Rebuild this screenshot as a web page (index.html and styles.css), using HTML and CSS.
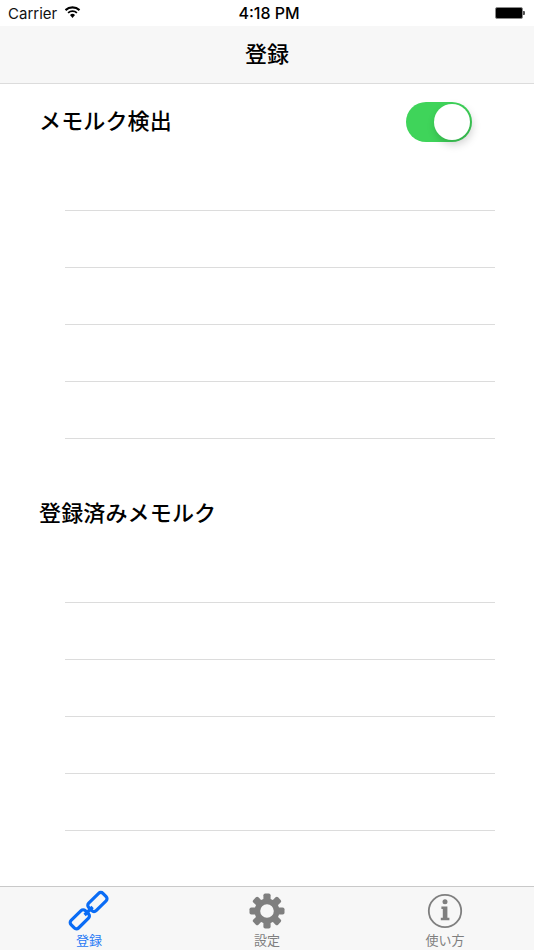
FILE: index.html
```html
<!DOCTYPE html>
<html lang="ja">
<head>
<meta charset="utf-8">
<title>登録</title>
<link rel="stylesheet" href="styles.css">
</head>
<body>
<div class="app">
  <div class="status">
    <div class="status-left">
      <span class="carrier">Carrier</span>
      <svg class="wifi" width="17" height="12" viewBox="0 0 17 12"><path d="M8.5 12 6 9a3.6 3.6 0 0 1 5 0Z" /><path d="M4.7 7.6a5.6 5.6 0 0 1 7.6 0l1.2-1.4a7.6 7.6 0 0 0-10 0Z"/><path d="M2.2 4.9a9.2 9.2 0 0 1 12.6 0L16.2 3.3a11.4 11.4 0 0 0-15.4 0Z"/></svg>
    </div>
    <span class="clock">4:18 PM</span>
    <div class="battery"><span class="battery-body"></span><span class="battery-cap"></span></div>
  </div>
  <header class="nav"><span class="nav-title">登録</span></header>
  <main class="content">
    <section class="section">
      <div class="section-head">
        <h2 class="section-title">メモルク検出</h2>
        <div class="switch"><span class="knob"></span></div>
      </div>
      <ul class="rows">
        <li class="row"></li><li class="row"></li><li class="row"></li><li class="row"></li><li class="row"></li>
      </ul>
    </section>
    <section class="section">
      <div class="section-head">
        <h2 class="section-title">登録済みメモルク</h2>
      </div>
      <ul class="rows">
        <li class="row"></li><li class="row"></li><li class="row"></li><li class="row"></li><li class="row"></li>
      </ul>
    </section>
  </main>
  <nav class="tabbar">
    <div class="tab active">
      <svg class="tab-icon" width="44" height="42" viewBox="0 0 44 42" fill="none" stroke="#0a6cf5" stroke-width="3.2">
        <rect x="2.8" y="24" width="20" height="10.6" rx="3" transform="rotate(-44.5 12.8 29.3)"/>
        <rect x="20.4" y="6.7" width="20" height="10.6" rx="3" transform="rotate(-44.5 30.4 12)"/>
        <path d="M17.6 25 25.6 17"/>
      </svg>
      <span class="tab-label">登録</span>
    </div>
    <div class="tab">
      <svg class="tab-icon" width="44" height="42" viewBox="0 0 44 42" fill="#7f7f7f">
        <path fill-rule="evenodd" d="M22 8.5a12.5 12.5 0 1 0 0 25 12.5 12.5 0 0 0 0-25Zm0 5.7a6.8 6.8 0 1 1 0 13.6 6.8 6.8 0 0 1 0-13.6Z"/>
        <rect x="18.4" y="3.5" width="7.2" height="8" rx="1.8"/>
        <rect x="18.4" y="30.5" width="7.2" height="8" rx="1.8"/>
        <rect x="4.5" y="17.4" width="8" height="7.2" rx="1.8"/>
        <rect x="31.5" y="17.4" width="8" height="7.2" rx="1.8"/>
        <rect x="18.4" y="3.5" width="7.2" height="8" rx="1.8" transform="rotate(45 22 21)"/>
        <rect x="18.4" y="3.5" width="7.2" height="8" rx="1.8" transform="rotate(135 22 21)"/>
        <rect x="18.4" y="3.5" width="7.2" height="8" rx="1.8" transform="rotate(225 22 21)"/>
        <rect x="18.4" y="3.5" width="7.2" height="8" rx="1.8" transform="rotate(315 22 21)"/>
      </svg>
      <span class="tab-label">設定</span>
    </div>
    <div class="tab">
      <svg class="tab-icon" width="44" height="42" viewBox="0 0 44 42" fill="#7f7f7f">
        <circle cx="22" cy="21" r="16.2" fill="none" stroke="#7f7f7f" stroke-width="1.8"/>
        <circle cx="22" cy="11.8" r="2.5"/>
        <path d="M18.4 16.6h6v11.2h2v2.4h-8.6v-2.4h2v-8.8h-1.4Z"/>
      </svg>
      <span class="tab-label">使い方</span>
    </div>
  </nav>
</div>
</body>
</html>
```
FILE: styles.css
```css
* { box-sizing: border-box; }
html, body { margin: 0; padding: 0; background: #fff; }
.app {
  width: 534px;
  height: 950px;
  display: flex;
  flex-direction: column;
  overflow: hidden;
  font-family: "Noto Sans CJK JP", "Noto Sans", sans-serif;
  color: #000;
}
.status {
  height: 26px;
  flex: none;
  display: grid;
  grid-template-columns: 1fr auto 1fr;
  align-items: center;
  padding: 0 9px 0 8px;
  font-family: Inter, "Liberation Sans", sans-serif;
}
.status-left { display: flex; align-items: center; gap: 7px; }
.carrier { font-size: 15px; color: #111; }
.wifi { fill: #000; margin-top: -2px; }
.clock { font-size: 16px; font-weight: 500; margin-left: 5px; }
.battery { justify-self: end; display: flex; align-items: center; }
.battery-body {
  width: 28px;
  height: 12px;
  background: #000;
  border: 1px solid #8a8a8a;
  border-radius: 2px;
}
.battery-cap { width: 2px; height: 4px; background: #555; border-radius: 0 1px 1px 0; }
.nav {
  height: 58px;
  flex: none;
  display: flex;
  align-items: center;
  justify-content: center;
  background: #f7f7f7;
  border-bottom: 1px solid #dcdcdc;
  font-size: 22px;
  font-weight: 500;
}
.nav-title { line-height: 50px; padding-bottom: 5px; }
.content { flex: 1; min-height: 0; }
.section { margin-bottom: 37px; }
.section-head {
  height: 70px;
  padding: 15px 62px 0 40px;
  display: flex;
  justify-content: space-between;
  align-items: flex-start;
}
.section-title { margin: 0 0 0 -1px; font-size: 22px; font-weight: 500; line-height: 40px; letter-spacing: 0.15px; }
.switch {
  width: 66px;
  height: 40px;
  margin-top: 3px;
  border-radius: 20px;
  background: #3fd45a;
  position: relative;
  flex: none;
}
.knob {
  position: absolute;
  top: 2px;
  right: 2px;
  width: 36px;
  height: 36px;
  border-radius: 50%;
  background: #fff;
  box-shadow: 2px 4px 10px rgba(0, 0, 0, 0.2);
}
.rows { list-style: none; margin: 0; padding: 0; }
.row {
  height: 57px;
  margin: 0 39px 0 65px;
  border-bottom: 1px solid #dcdcdc;
}
.tabbar {
  height: 64px;
  flex: none;
  display: grid;
  grid-template-columns: repeat(3, 1fr);
  background: #f7f7f7;
  border-top: 1px solid #c9c9c9;
}
.tab {
  display: flex;
  flex-direction: column;
  align-items: center;
  color: #7f7f7f;
  padding-top: 3px;
}
.tab-icon { flex: none; display: block; }
.tab-label { font-size: 13px; line-height: 17px; margin-top: -1px; }
.tab.active { color: #1f78f5; }
```
